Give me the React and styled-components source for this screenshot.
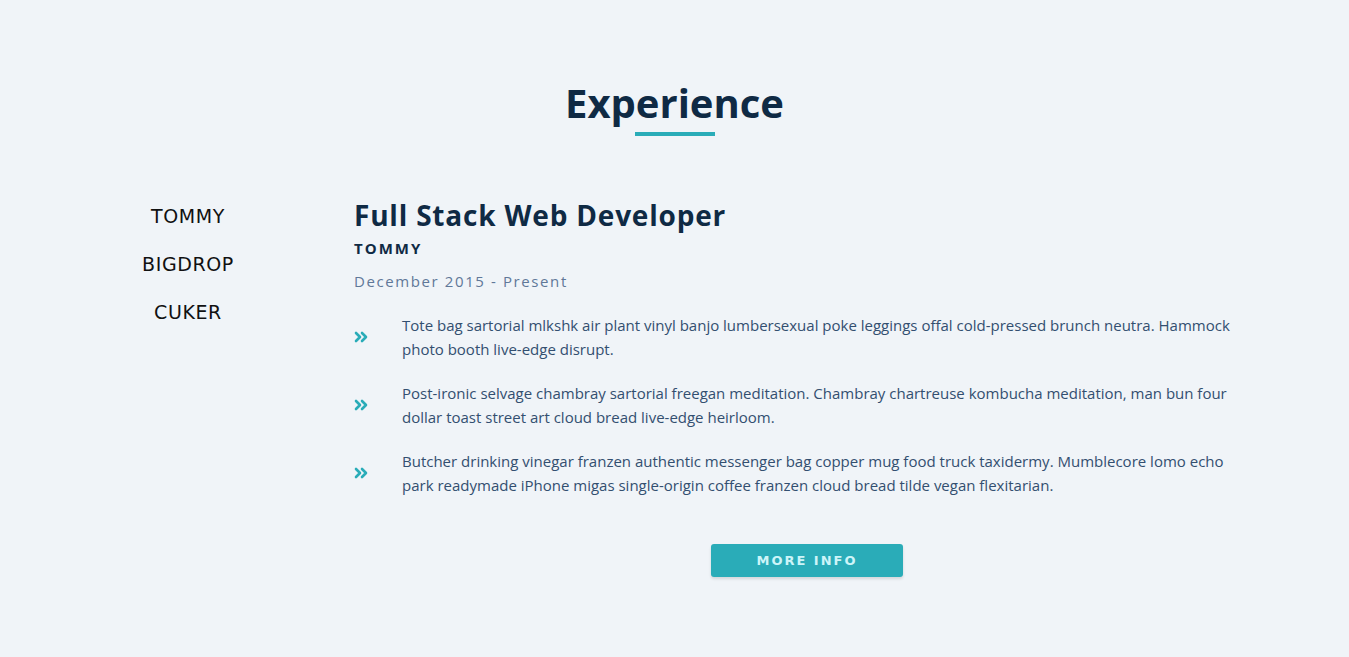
import React from 'react';
import styled, { createGlobalStyle } from 'styled-components';

const GlobalStyle = createGlobalStyle`
  html, body {
    margin: 0;
    padding: 0;
    background: #f0f4f8;
  }
  body {
    font-family: "Open Sans", "Noto Sans", sans-serif;
  }
`;

const Section = styled.section`
  min-height: 657px;
  box-sizing: border-box;
  padding-top: 76px;
  background: #f0f4f8;
`;

const Heading = styled.h2`
  margin: 0;
  text-align: center;
  font-family: "Open Sans", sans-serif;
  font-size: 40px;
  font-weight: 700;
  line-height: 54px;
  letter-spacing: 0;
  color: #0f2a44;
`;

const Underline = styled.div`
  width: 80px;
  height: 4px;
  margin: 2px auto 0;
  background: #2aacb8;
`;

const Body = styled.div`
  display: flex;
  gap: 82px;
  padding-left: 104px;
  margin-top: 62px;
`;

const Tabs = styled.ul`
  list-style: none;
  margin: 0;
  padding: 6px 0 0;
  width: 168px;
  display: flex;
  flex-direction: column;
  gap: 24px;
`;

const Tab = styled.li`
  text-align: center;
  font-family: "DejaVu Sans", sans-serif;
  font-size: 19px;
  line-height: 24px;
  letter-spacing: 0.6px;
  color: #111;
`;

const Content = styled.div`
  width: 906px;
`;

const JobTitle = styled.h3`
  margin: 0;
  font-size: 28px;
  font-weight: 700;
  line-height: 34px;
  letter-spacing: 0.8px;
  color: #0f2a44;
`;

const Company = styled.div`
  margin-top: 6px;
  font-size: 15px;
  font-weight: 700;
  line-height: 20px;
  letter-spacing: 2px;
  color: #0f2a44;
`;

const Dates = styled.div`
  margin-top: 13px;
  font-size: 15px;
  line-height: 20px;
  letter-spacing: 1.6px;
  color: #607898;
`;

const Duties = styled.ul`
  list-style: none;
  margin: 22px 0 0;
  padding: 0;
  display: flex;
  flex-direction: column;
  gap: 20px;
`;

const Duty = styled.li`
  display: flex;
  align-items: center;
`;

const Arrow = styled.span`
  flex: 0 0 48px;
  display: flex;
  align-items: center;
  color: #2aacb8;
`;

const DutyText = styled.p`
  margin: 0;
  max-width: 845px;
  font-size: 15px;
  line-height: 24px;
  color: #334f70;
`;

const ButtonRow = styled.div`
  display: flex;
  justify-content: center;
  margin-top: 47px;
`;

const Button = styled.button`
  width: 192px;
  height: 33px;
  border: none;
  border-radius: 3px;
  background: #2aacb8;
  color: #cdf5f9;
  font-family: "DejaVu Sans", sans-serif;
  font-size: 13px;
  font-weight: 700;
  letter-spacing: 2px;
  box-shadow: 0 2px 3px rgba(0, 0, 0, 0.12);
  cursor: pointer;
`;

const DoubleChevron = () => (
  <svg width="14" height="12" viewBox="0 0 14 12" fill="none" stroke="currentColor" strokeWidth="2.6" strokeLinecap="round" strokeLinejoin="round">
    <path d="M2 2l4 4-4 4" />
    <path d="M8 2l4 4-4 4" />
  </svg>
);

const duties = [
  'Tote bag sartorial mlkshk air plant vinyl banjo lumbersexual poke leggings offal cold-pressed brunch neutra. Hammock photo booth live-edge disrupt.',
  'Post-ironic selvage chambray sartorial freegan meditation. Chambray chartreuse kombucha meditation, man bun four dollar toast street art cloud bread live-edge heirloom.',
  'Butcher drinking vinegar franzen authentic messenger bag copper mug food truck taxidermy. Mumblecore lomo echo park readymade iPhone migas single-origin coffee franzen cloud bread tilde vegan flexitarian.',
];

export default function App() {
  return (
    <>
      <GlobalStyle />
      <Section>
        <Heading>Experience</Heading>
        <Underline />
        <Body>
          <Tabs>
            <Tab>TOMMY</Tab>
            <Tab>BIGDROP</Tab>
            <Tab>CUKER</Tab>
          </Tabs>
          <Content>
            <JobTitle>Full Stack Web Developer</JobTitle>
            <Company>TOMMY</Company>
            <Dates>December 2015 - Present</Dates>
            <Duties>
              {duties.map((d, i) => (
                <Duty key={i}>
                  <Arrow><DoubleChevron /></Arrow>
                  <DutyText>{d}</DutyText>
                </Duty>
              ))}
            </Duties>
            <ButtonRow>
              <Button>MORE INFO</Button>
            </ButtonRow>
          </Content>
        </Body>
      </Section>
    </>
  );
}
